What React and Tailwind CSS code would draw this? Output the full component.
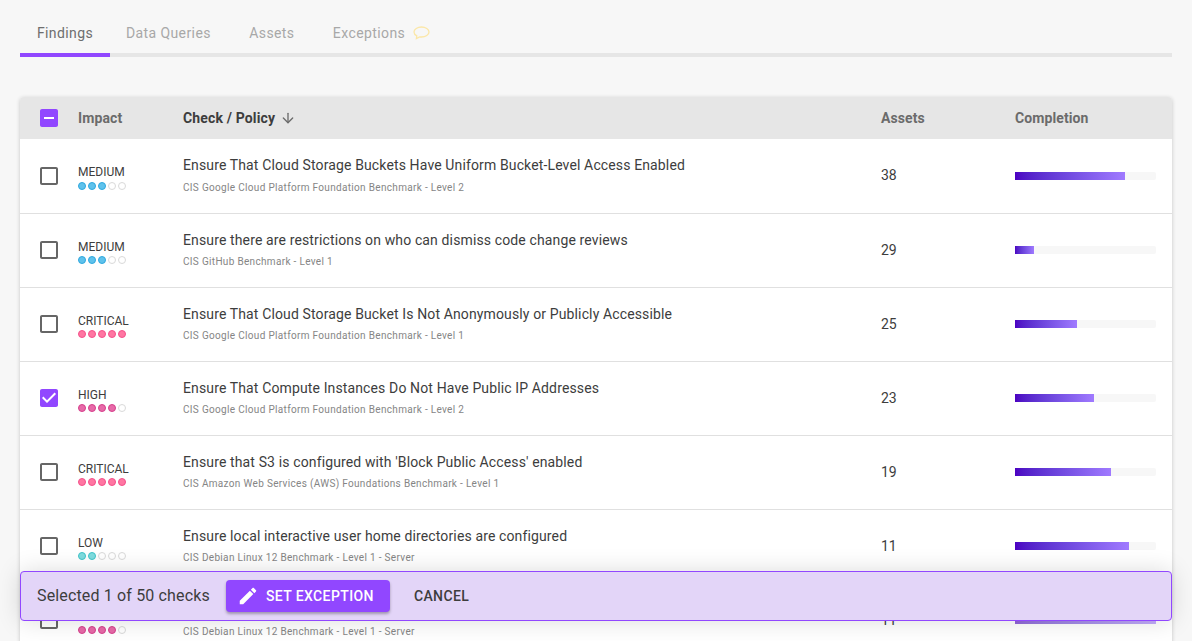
import React from "react";
import { ArrowDown } from "lucide-react";

const tabs = ["Findings", "Data Queries", "Assets", "Exceptions"];

const levels = {
  LOW: { count: 2, dot: "bg-[#7fdcdf] border-[#3fc4c9]" },
  MEDIUM: { count: 3, dot: "bg-[#5fc2ec] border-[#2fa8de]" },
  HIGH: { count: 4, dot: "bg-[#e76aa8] border-[#d63f8c]" },
  CRITICAL: { count: 5, dot: "bg-[#ff76a2] border-[#f5508a]" },
};

const rows = [
  { impact: "MEDIUM", title: "Ensure That Cloud Storage Buckets Have Uniform Bucket-Level Access Enabled", policy: "CIS Google Cloud Platform Foundation Benchmark - Level 2", assets: 38, pct: 78 },
  { impact: "MEDIUM", title: "Ensure there are restrictions on who can dismiss code change reviews", policy: "CIS GitHub Benchmark - Level 1", assets: 29, pct: 13.5 },
  { impact: "CRITICAL", title: "Ensure That Cloud Storage Bucket Is Not Anonymously or Publicly Accessible", policy: "CIS Google Cloud Platform Foundation Benchmark - Level 1", assets: 25, pct: 44 },
  { impact: "HIGH", title: "Ensure That Compute Instances Do Not Have Public IP Addresses", policy: "CIS Google Cloud Platform Foundation Benchmark - Level 2", assets: 23, pct: 56, checked: true },
  { impact: "CRITICAL", title: "Ensure that S3 is configured with 'Block Public Access' enabled", policy: "CIS Amazon Web Services (AWS) Foundations Benchmark - Level 1", assets: 19, pct: 68 },
  { impact: "LOW", title: "Ensure local interactive user home directories are configured", policy: "CIS Debian Linux 12 Benchmark - Level 1 - Server", assets: 11, pct: 81 },
  { impact: "HIGH", title: "Ensure permissions on all logfiles are configured", policy: "CIS Debian Linux 12 Benchmark - Level 1 - Server", assets: 11, pct: 100, faded: true },
];

const Box = ({ state }) => {
  if (state === "off") {
    return (
      <svg viewBox="0 0 24 24" className="w-6 h-6 fill-[#666666]">
        <path d="M19 5v14H5V5h14m0-2H5c-1.1 0-2 .9-2 2v14c0 1.1.9 2 2 2h14c1.1 0 2-.9 2-2V5c0-1.1-.9-2-2-2z" />
      </svg>
    );
  }
  return (
    <svg viewBox="0 0 24 24" className="w-6 h-6 fill-[#9147ff]">
      <rect x="5" y="5" width="14" height="14" fill="#ffffff" />
      {state === "on" ? (
        <path d="M19 3H5c-1.11 0-2 .9-2 2v14c0 1.1.89 2 2 2h14c1.11 0 2-.9 2-2V5c0-1.1-.89-2-2-2zm-9 14l-5-5 1.41-1.41L10 14.17l7.59-7.59L19 8l-9 9z" />
      ) : (
        <path d="M19 3H5c-1.1 0-2 .9-2 2v14c0 1.1.9 2 2 2h14c1.1 0 2-.9 2-2V5c0-1.1-.9-2-2-2zm-2 10H7v-2h10v2z" />
      )}
    </svg>
  );
};

const Dots = ({ impact, first }) => {
  const { count, dot } = levels[impact];
  return (
    <div className={`flex gap-[2px] ${first ? "mt-[3px]" : "mt-[2px]"}`}>
      {[0, 1, 2, 3, 4].map((i) => (
        <span
          key={i}
          className={
            i < count
              ? `w-2 h-2 rounded-full border ${dot}`
              : "w-2 h-2 rounded-full border border-[#d9d9d9] bg-white"
          }
        />
      ))}
    </div>
  );
};

const gridCols = "grid grid-cols-[163px_698px_134px_1fr] items-center";

const Row = ({ row, first }) => (
  <div className={`${gridCols} ${first ? "h-[75px]" : "h-[74px]"} border-b border-[#e0e0e0] bg-white`}>
    <div className="flex items-center pl-[17px]">
      <div className={first ? "" : "mb-[1px]"}>
        <Box state={row.checked ? "on" : "off"} />
      </div>
      <div className={`ml-[17px] ${first ? "pt-[3px]" : "pt-[2px]"}`}>
        <div className="text-[12px] leading-[14px] text-[#3d3d3d]">{row.impact}</div>
        <Dots impact={row.impact} first={first} />
      </div>
    </div>
    <div className={first ? "pb-[3px]" : "pb-[2px]"}>
      <div className="text-[14px] leading-5 tracking-[0.13px] text-[#3d3d3d]">{row.title}</div>
      <div className={`${first ? "mt-[6px]" : "mt-[5px]"} text-[10px] leading-[14px] tracking-[0.32px] text-[#858585]`}>
        {row.policy}
      </div>
    </div>
    <div className={`text-[14px] text-[#3d3d3d] ${first ? "pb-[2px]" : ""}`}>{row.assets}</div>
    <div className={`pr-4 ${first ? "" : "pb-[1px]"}`}>
      <div className="h-2 rounded-[2px] bg-[#f7f7f7]">
        <div
          className={`h-full bg-gradient-to-r from-[#4c00c2] to-[#a07aff] ${row.faded ? "opacity-60" : ""}`}
          style={{ width: `${row.pct}%` }}
        />
      </div>
    </div>
  </div>
);

export default function App() {
  return (
    <div className="relative h-[641px] overflow-hidden bg-[#f7f7f7] px-5 font-['Roboto',sans-serif]">
      <div className="flex h-[57px] border-b-4 border-[#e6e6e6]">
        {tabs.map((tab, i) => (
          <div
            key={tab}
            className={`relative flex min-w-[90px] items-center justify-center gap-2 px-4 pt-[13px] text-[14px] tracking-[0.4px] ${
              i === 0 ? "text-[#6e6e6e]" : "text-[#a8a8a8]"
            }`}
          >
            {tab}
            {tab === "Exceptions" && (
              <svg viewBox="0 0 17 14" className="h-[14px] w-[17px] fill-none stroke-[#fbe7a8] stroke-[1.3]">
                <path d="M8.5 1C4.4 1 1 3.2 1 6c0 1.6 1.1 3 2.8 3.9l-.4 2.6 3.2-1.6c.6.1 1.2.1 1.9.1 4.1 0 7.5-2.2 7.5-5S12.6 1 8.5 1z" />
              </svg>
            )}
            {i === 0 && <span className="absolute inset-x-0 -bottom-1 h-1 bg-[#9147ff]" />}
          </div>
        ))}
      </div>

      <div className="mt-10 rounded-t-[4px] shadow-[0_1px_4px_rgba(0,0,0,0.2)]">
        <div className={`${gridCols} h-[42px] rounded-t-[4px] bg-[#e6e6e6] text-[14px] font-bold tracking-[0.1px] text-[#6b6b6b]`}>
          <div className="flex items-center pl-[17px]">
            <Box state="some" />
            <span className="ml-[17px]">Impact</span>
          </div>
          <div className="flex items-center gap-[5px] tracking-[0.15px] text-[#3d3d3d]">
            Check / Policy
            <ArrowDown size={16} className="text-[#6b6b6b]" />
          </div>
          <div>Assets</div>
          <div>Completion</div>
        </div>
        {rows.map((row, i) => (
          <Row key={i} row={row} first={i === 0} />
        ))}
      </div>

      <div className="absolute left-5 right-5 top-[571px] flex h-[50px] items-center rounded-[4px] border border-[#9147ff] bg-[#e3d5f8] pl-4 shadow-[0_0_24px_rgba(0,0,0,0.14)]">
        <span className="text-[16px] tracking-[0.15px] text-[#3d3d3d]">Selected 1 of 50 checks</span>
        <button className="ml-4 flex h-8 w-[164px] items-center gap-[7px] rounded-[4px] bg-[#9147ff] pl-[11px] text-[14px] font-medium tracking-[0.4px] text-white shadow-[0_2px_3px_rgba(0,0,0,0.3)]">
          <svg viewBox="0 0 24 24" className="h-[22px] w-[22px] fill-white">
            <path d="M3 17.25V21h3.75L17.81 9.94l-3.75-3.75L3 17.25zM20.71 7.04c.39-.39.39-1.02 0-1.41l-2.34-2.34c-.39-.39-1.02-.39-1.41 0l-1.83 1.83 3.75 3.75 1.83-1.83z" />
          </svg>
          SET EXCEPTION
        </button>
        <button className="ml-6 text-[14px] font-medium tracking-[0.4px] text-[#3d3d3d]">CANCEL</button>
      </div>
    </div>
  );
}
